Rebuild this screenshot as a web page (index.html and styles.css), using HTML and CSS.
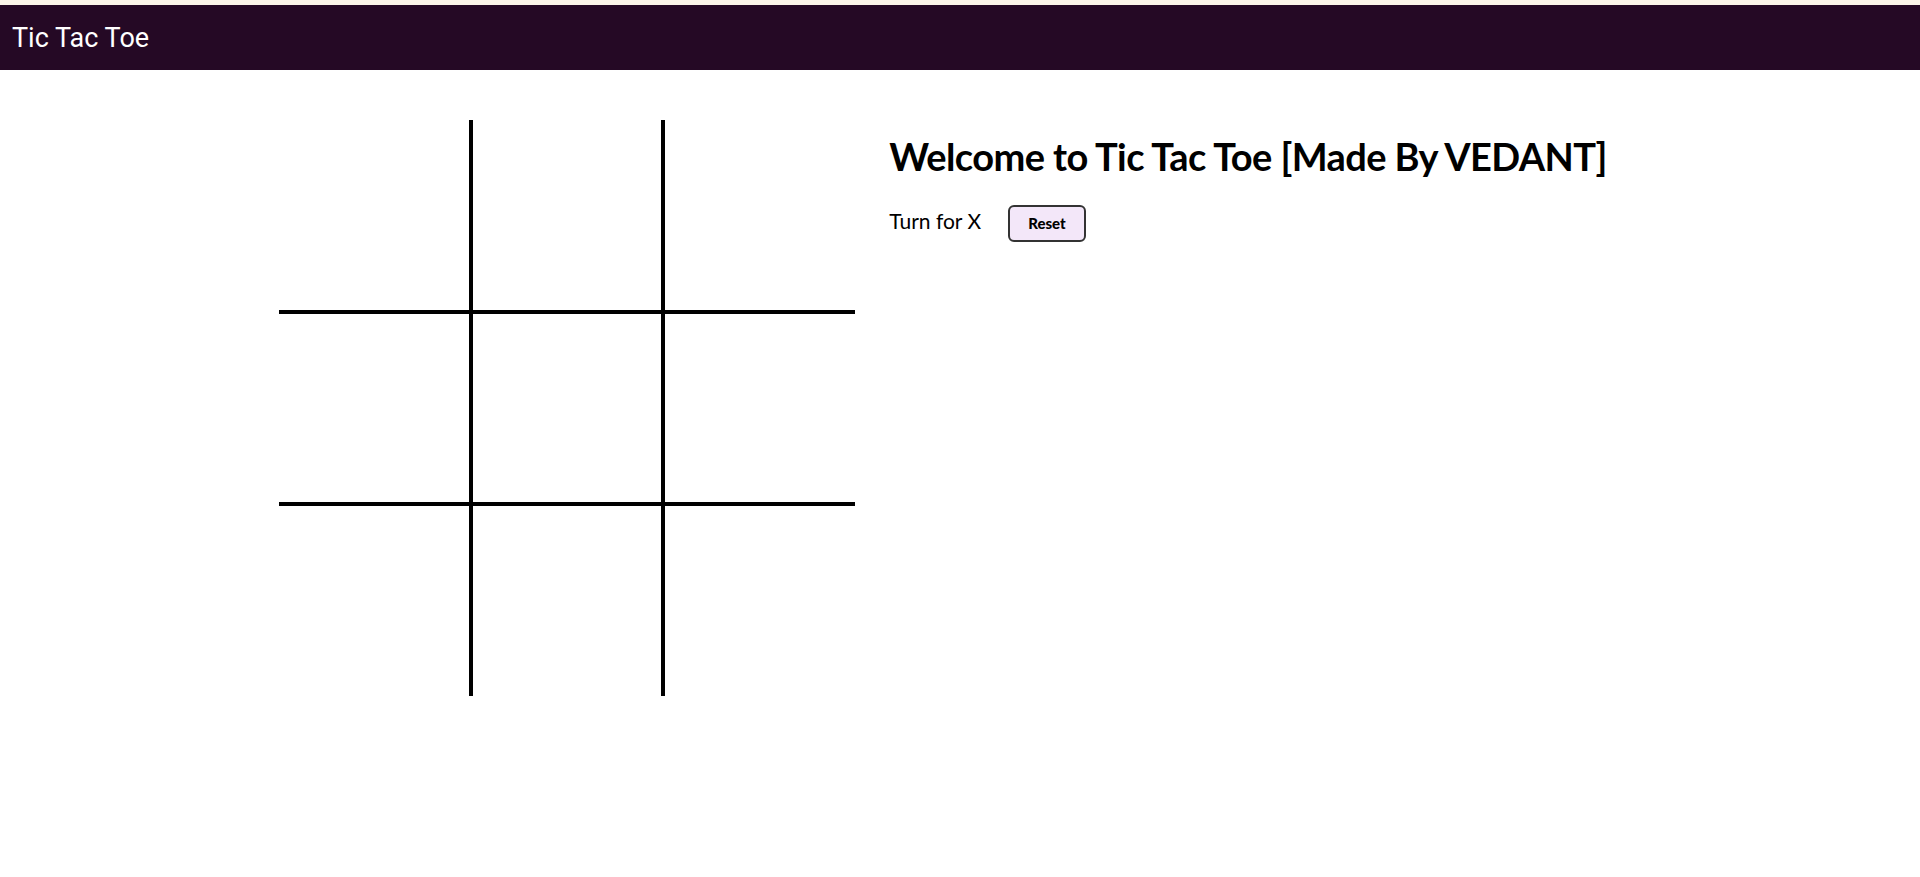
FILE: index.html
```html
<!DOCTYPE html>
<html lang="en">
<head>
    <meta charset="UTF-8" />
    <meta name="viewport" content="width=device-width, initial-scale=1.0"/>
    <title>Tic Tac Toe</title>
    <link rel="stylesheet" href="styles.css">
</head>
<body>
    <nav>
        <ul>
            <li>Tic Tac Toe</li>
        </ul>
    </nav>

    <div class="gameContainer">
        <div class="container">
            <div class="box bt-0 bl-0"><span class="boxtext"></span></div>
            <div class="box bt-0"><span class="boxtext"></span></div>
            <div class="box bt-0 br-0"><span class="boxtext"></span></div>
            <div class="box bl-0"><span class="boxtext"></span></div>
            <div class="box"><span class="boxtext"></span></div>
            <div class="box br-0"><span class="boxtext"></span></div>
            <div class="box bl-0 bb-0"><span class="boxtext"></span></div>
            <div class="box bb-0"><span class="boxtext"></span></div>
            <div class="box bb-0 br-0"><span class="boxtext"></span></div>
        </div>
        <div class="gameInfo">
            <h1>Welcome to Tic Tac Toe [Made By VEDANT]</h1>
            <div>
                <span class="info">Turn for X</span>
                <button id="reset">Reset</button>
            </div>
        </div>
    </div>

    <script>
        let turn = "X";
        let isgameover = false;
        const boxes = document.querySelectorAll('.box');
        const info = document.querySelector('.info');

        const changeTurn = () => turn === "X" ? "0" : "X";

        const checkWin = () => {
            const texts = document.querySelectorAll('.boxtext');
            const wins = [
                [0, 1, 2], [3, 4, 5], [6, 7, 8],
                [0, 3, 6], [1, 4, 7], [2, 5, 8],
                [0, 4, 8], [2, 4, 6]
            ];
            wins.forEach(e => {
                if (texts[e[0]].innerText !== "" &&
                    texts[e[0]].innerText === texts[e[1]].innerText &&
                    texts[e[1]].innerText === texts[e[2]].innerText) {
                    info.innerText = texts[e[0]].innerText + " Won";
                    isgameover = true;
                }
            });
        };

        boxes.forEach(box => {
            const boxtext = box.querySelector('.boxtext');
            box.addEventListener('click', () => {
                if (boxtext.innerText === '' && !isgameover) {
                    boxtext.innerText = turn;
                    turn = changeTurn();
                    checkWin();
                    if (!isgameover) {
                        info.innerText = "Turn for " + turn;
                    }
                }
            });
        });

        document.getElementById('reset').addEventListener('click', () => {
            document.querySelectorAll('.boxtext').forEach(t => t.innerText = "");
            turn = "X";
            isgameover = false;
            info.innerText = "Turn for " + turn;
        });
    </script>
</body>
</html>
```

FILE: styles.css
```css
body {
    margin: 0;
    padding: 0;
    border-top: 5px solid #fcf5e9;
}

nav {
    background-color: rgb(37, 9, 37);
    color: white;
    height: 65px;
    font-size: 27px;
    display: flex;
    align-items: center;
    padding: 0 12px;
    font-family: 'Roboto', sans-serif;
}

nav ul {
    list-style-type: none;
    margin: 0;
    padding: 0;
}

.gameContainer {
    display: flex;
    justify-content: center;
    margin-top: 50px;
}

.container {
    display: grid;
    grid-template-rows: repeat(3, 10vw);
    grid-template-columns: repeat(3, 10vw);
    font-family: 'Roboto', sans-serif;
}

.box {
    border: 2px solid black;
    font-size: 8vw;
    cursor: pointer;
    display: flex;
    justify-content: center;
    align-items: center;
}

.box:hover {
    background-color: rgb(242, 234, 250);
}

.bt-0 { border-top: 0; }
.bb-0 { border-bottom: 0; }
.bl-0 { border-left: 0; }
.br-0 { border-right: 0; }

.gameInfo {
    padding: 0 34px;
    font-family: 'Lato', sans-serif;
}

.gameInfo h1 {
    font-size: 38px;
    font-weight: 700;
    margin: 13px 0 26px;
    letter-spacing: -0.6px;
}

.info {
    font-size: 21px;
}

#reset {
    margin: 0 23px;
    padding: 7px 18px 8px;
    background: #f3e7f9;
    border: 2px solid #333;
    border-radius: 6px;
    cursor: pointer;
    font-family: 'Lato', sans-serif;
    font-size: 15px;
    font-weight: 900;
    color: #000;
}
```
